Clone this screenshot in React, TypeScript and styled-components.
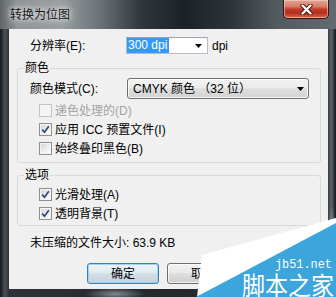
import React from "react";
import styled, { createGlobalStyle } from "styled-components";

const UI_FONT = `"Liberation Sans", "Noto Sans CJK SC", sans-serif`;

const Global = createGlobalStyle`
  html, body { margin: 0; padding: 0; background: #1b1f23; }
  body { width: 336px; height: 297px; overflow: hidden; }
`;

const Window = styled.div`
  position: relative;
  width: 336px;
  height: 297px;
  box-sizing: border-box;
  display: flex;
  flex-direction: column;
  overflow: hidden;
  background:
    radial-gradient(ellipse 30px 6px at 115px 294px, rgba(200, 215, 230, 0.55), transparent),
    radial-gradient(ellipse 4px 30px at 332px 235px, rgba(170, 200, 235, 0.6), transparent),
    linear-gradient(90deg, #15181b 0%, #4b5156 1.5%, #2c3236 2.6%, #23282c 50%, #2c3237 97.3%, #5d646a 98.6%, #15181b 100%);
  font-family: ${UI_FONT};
  font-size: 12px;
  color: #000;
`;

const TitleBar = styled.div`
  height: 29px;
  flex: none;
  display: flex;
  align-items: flex-start;
  background: linear-gradient(90deg, #5f6568 0%, #8f9497 5%, #9a9fa2 18%, #6a7074 30%, #30363b 42%, #1c2126 55%, #2c3338 68%, #525a5f 82%, #646b70 100%);
`;

const Title = styled.div`
  margin: 6px 0 0 10px;
  font-family: "Noto Sans CJK SC", sans-serif;
  font-size: 12px;
  line-height: 16px;
  color: #141414;
  text-shadow: 0 0 5px #ffffff, 0 0 9px rgba(255, 255, 255, 0.85);
`;

const CloseButton = styled.div`
  margin-left: auto;
  margin-right: 7px;
  width: 46px;
  height: 19px;
  box-sizing: border-box;
  border: 1px solid #3b1410;
  border-top: none;
  border-radius: 0 0 5px 5px;
  background: linear-gradient(180deg, #e3a494 0%, #d9806b 35%, #c13a2b 52%, #b42f1f 72%, #d9694f 100%);
  box-shadow: inset 0 0 0 1px rgba(255, 225, 215, 0.5);
  display: flex;
  align-items: center;
  justify-content: center;
`;

const Client = styled.div`
  margin: 0 8px 0 9px;
  height: 260px;
  flex: none;
  background: #f0f0f0;
  box-sizing: border-box;
  padding: 8px 7px 0 8px;
  display: flex;
  flex-direction: column;
`;

const FieldRow = styled.div<{ $h: number; $pl: number }>`
  display: flex;
  align-items: center;
  height: ${(p) => p.$h}px;
  padding-left: ${(p) => p.$pl}px;
`;

const FieldLabel = styled.span<{ $w: number }>`
  width: ${(p) => p.$w}px;
  flex: none;
  line-height: 14px;
  white-space: nowrap;
`;

const DpiInput = styled.div`
  width: 82px;
  height: 17px;
  box-sizing: border-box;
  border: 1px solid #b5bcc6;
  border-top-color: #9aa2ad;
  background: #fff;
  display: flex;
  align-items: center;
  padding: 0 5px 0 0;
`;

const Selected = styled.span`
  background: #3399ff;
  color: #fff;
  line-height: 15px;
  padding: 0 2px 0 1px;
  white-space: nowrap;
`;

const Unit = styled.span`
  margin-left: 4px;
  line-height: 14px;
`;

const ArrowWrap = styled.span`
  margin-left: auto;
  display: flex;
  align-items: center;
`;

const Group = styled.fieldset<{ $mt: number }>`
  margin: ${(p) => p.$mt}px 0 0 0;
  padding: 0;
  min-width: 0;
  border: 1px solid #d5dadf;
  border-radius: 3px;
`;

const Legend = styled.legend`
  margin-left: 6px;
  padding: 0 1px;
  font-size: 12px;
  line-height: 14px;
`;

const GroupBody = styled.div<{ $pt: number; $pb: number }>`
  padding: ${(p) => p.$pt}px 0 ${(p) => p.$pb}px 12px;
  display: flex;
  flex-direction: column;
`;

const Combo = styled.div`
  width: 182px;
  height: 21px;
  box-sizing: border-box;
  border: 1px solid #707070;
  border-radius: 3px;
  background: linear-gradient(180deg, #f3f3f3 0%, #ececec 45%, #dedede 52%, #d2d2d2 100%);
  box-shadow: inset 0 0 0 1px rgba(255, 255, 255, 0.75);
  display: flex;
  align-items: center;
  padding: 0 4px 0 5px;
  line-height: 14px;
  white-space: nowrap;
`;

const CheckList = styled.div<{ $mt: number }>`
  margin-top: ${(p) => p.$mt}px;
  display: flex;
  flex-direction: column;
`;

const CheckRow = styled.div<{ $disabled?: boolean }>`
  height: 19px;
  display: flex;
  align-items: center;
  padding-left: 9px;
  line-height: 14px;
  white-space: nowrap;
  color: ${(p) => (p.$disabled ? "#a3a3a3" : "#000")};
`;

const Box = styled.span<{ $disabled?: boolean }>`
  width: 13px;
  height: 13px;
  box-sizing: border-box;
  flex: none;
  margin-right: 3px;
  border: 1px solid ${(p) => (p.$disabled ? "#c2c2c2" : "#8e8f8f")};
  background: ${(p) =>
    p.$disabled
      ? "#f4f4f4"
      : "linear-gradient(135deg, #cfd2d6 0%, #eeeeef 55%, #ffffff 100%)"};
  box-shadow: inset 0 0 0 1px ${(p) => (p.$disabled ? "#f7f7f7" : "#f4f4f4")};
  display: flex;
  align-items: center;
  justify-content: center;
`;

const InfoLine = styled.div`
  margin-top: 10px;
  padding-left: 13px;
  line-height: 14px;
  white-space: nowrap;
`;

const ButtonRow = styled.div`
  margin-top: 13px;
  padding-left: 70px;
  display: flex;
  gap: 8px;
`;

const Button = styled.button<{ $primary?: boolean }>`
  width: 72px;
  height: 21px;
  box-sizing: border-box;
  padding: 0;
  font-family: ${UI_FONT};
  font-size: 12px;
  line-height: 14px;
  color: #000;
  border-radius: 3px;
  border: 1px solid ${(p) => (p.$primary ? "#3c7fb1" : "#707070")};
  background: ${(p) =>
    p.$primary
      ? "linear-gradient(180deg, #eef4f8 0%, #e2ebf1 45%, #d3dde5 52%, #c6d2db 100%)"
      : "linear-gradient(180deg, #f2f2f2 0%, #ebebeb 45%, #dddddd 52%, #cfcfcf 100%)"};
  box-shadow: inset 0 0 0 1px ${(p) => (p.$primary ? "#9fd3f0" : "rgba(255,255,255,0.7)")};
`;

const Watermark = styled.svg`
  position: absolute;
  right: 0;
  bottom: 0;
  z-index: 2;
`;

const ArrowIcon = ({ w = 7 }: { w?: number }) => (
  <svg width={w} height={4} viewBox={`0 0 ${w} 4`}>
    <polygon points={`0,0 ${w},0 ${w / 2},4`} fill="#000" />
  </svg>
);

const CloseGlyph = () => (
  <svg width="13" height="11" viewBox="0 0 13 11">
    <path d="M2.5 1.5 L10.5 9.5 M10.5 1.5 L2.5 9.5" stroke="#4a140c" strokeWidth="4.2" strokeLinecap="round" />
    <path d="M2.5 1.5 L10.5 9.5 M10.5 1.5 L2.5 9.5" stroke="#ffffff" strokeWidth="2.4" strokeLinecap="round" />
  </svg>
);

const CheckMark = () => (
  <svg width="9" height="9" viewBox="0 0 9 9">
    <path d="M1.2 4.6 L3.5 7.2 L7.8 1.3" fill="none" stroke="#2f4578" strokeWidth="1.7" />
  </svg>
);

type CheckProps = { label: string; checked?: boolean; disabled?: boolean };

const Check = ({ label, checked, disabled }: CheckProps) => (
  <CheckRow $disabled={disabled}>
    <Box $disabled={disabled}>{checked && <CheckMark />}</Box>
    {label}
  </CheckRow>
);

export default function App() {
  return (
    <>
      <Global />
      <Window>
        <TitleBar>
          <Title>转换为位图</Title>
          <CloseButton>
            <CloseGlyph />
          </CloseButton>
        </TitleBar>
        <Client>
          <FieldRow $h={17} $pl={13}>
            <FieldLabel $w={96}>分辨率(E):</FieldLabel>
            <DpiInput>
              <Selected>300 dpi</Selected>
              <ArrowWrap>
                <ArrowIcon w={7} />
              </ArrowWrap>
            </DpiInput>
            <Unit>dpi</Unit>
          </FieldRow>

          <Group $mt={7}>
            <Legend>颜色</Legend>
            <GroupBody $pt={3} $pb={4}>
              <FieldRow $h={21} $pl={0}>
                <FieldLabel $w={97}>颜色模式(C):</FieldLabel>
                <Combo>
                  CMYK 颜色 （32 位）
                  <ArrowWrap>
                    <ArrowIcon w={7} />
                  </ArrowWrap>
                </Combo>
              </FieldRow>
              <CheckList $mt={2}>
                <Check label="递色处理的(D)" disabled />
                <Check label="应用 ICC 预置文件(I)" checked />
                <Check label="始终叠印黑色(B)" />
              </CheckList>
            </GroupBody>
          </Group>

          <Group $mt={5}>
            <Legend>选项</Legend>
            <GroupBody $pt={3} $pb={2}>
              <CheckList $mt={0}>
                <Check label="光滑处理(A)" checked />
                <Check label="透明背景(T)" checked />
              </CheckList>
            </GroupBody>
          </Group>

          <InfoLine>未压缩的文件大小: 63.9 KB</InfoLine>

          <ButtonRow>
            <Button $primary>确定</Button>
            <Button>取消</Button>
          </ButtonRow>
        </Client>

        <Watermark width="141" height="79" viewBox="0 0 141 79">
          <polygon points="7,37 141,0 141,6 2,79" fill="#ffffff" />
          <polygon points="141,5 141,79 1,79" fill="#3ba5dc" />
          <text
            x="80"
            y="50"
            fill="#ffffff"
            fontFamily="'Liberation Mono', monospace"
            fontSize="13"
            textLength="57"
            lengthAdjust="spacingAndGlyphs"
          >
            jb51.net
          </text>
          <text
            x="47"
            y="77"
            fill="#ffffff"
            fontFamily="'Noto Sans CJK SC', sans-serif"
            fontSize="25"
            textLength="92"
            lengthAdjust="spacingAndGlyphs"
          >
            脚本之家
          </text>
        </Watermark>
      </Window>
    </>
  );
}
